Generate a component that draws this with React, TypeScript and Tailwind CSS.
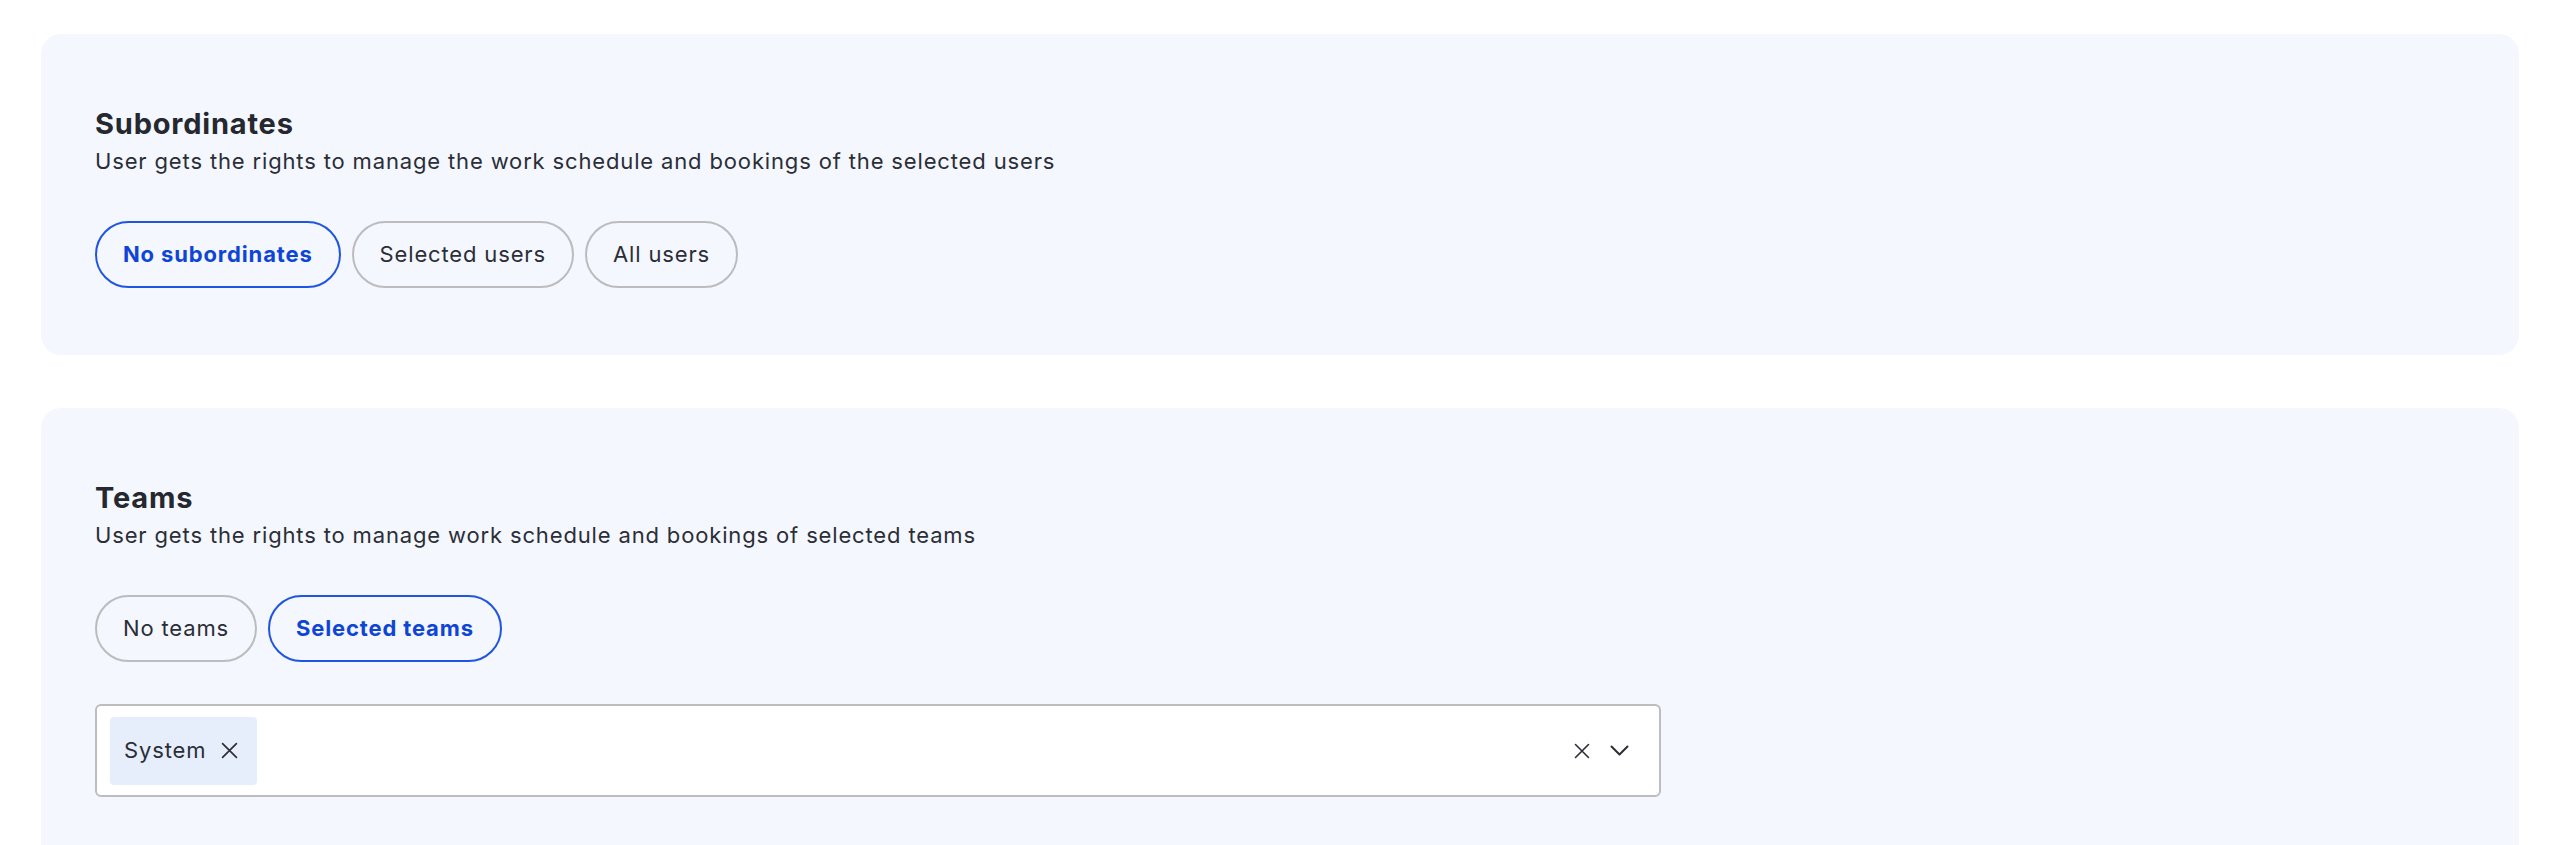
import React from "react";

const font = { fontFamily: "Inter, 'Noto Sans', sans-serif" };

function Pill({ label, active }: { label: string; active?: boolean }) {
  return (
    <button
      className={
        active
          ? "h-[67px] rounded-full border-2 border-[#1f55e0] px-[26px] text-[22px] tracking-[0.85px] font-bold text-[#0f45d6] bg-transparent"
          : "h-[67px] rounded-full border-2 border-[#bcbcbf] px-[26px] text-[22px] tracking-[0.85px] font-normal text-[#2b2e36] bg-transparent"
      }
    >
      {label}
    </button>
  );
}

function XIcon({ size = 17 }: { size?: number }) {
  return (
    <svg width={size} height={size} viewBox="0 0 16 16" fill="none" stroke="#2b2e36" strokeWidth={1.6} strokeLinecap="round">
      <path d="M1.5 1.5 L14.5 14.5 M14.5 1.5 L1.5 14.5" />
    </svg>
  );
}

function Chevron() {
  return (
    <svg width="19" height="11" viewBox="0 0 19 11" fill="none" stroke="#2b2e36" strokeWidth={2} strokeLinecap="round" strokeLinejoin="round">
      <path d="M1.5 1.5 L9.5 9.5 L17.5 1.5" />
    </svg>
  );
}

function Card({ children }: { children: React.ReactNode }) {
  return <div className="rounded-[20px] bg-[#f4f7fe] px-[54px] pt-[72px] pb-[67px]">{children}</div>;
}

export default function App() {
  return (
    <div className="min-h-screen bg-white px-[41px] pt-[34px] text-[#2b2e36]" style={font}>
      <div className="flex flex-col gap-[53px]">
        <Card>
          <h2 className="text-[29px] leading-[36px] tracking-[0.8px] font-bold text-[#25282f]">Subordinates</h2>
          <p className="mt-[4px] text-[22px] leading-[30px] tracking-[0.85px]">
            User gets the rights to manage the work schedule and bookings of the selected users
          </p>
          <div className="mt-[45px] flex gap-[11px]">
            <Pill label="No subordinates" active />
            <Pill label="Selected users" />
            <Pill label="All users" />
          </div>
        </Card>
        <Card>
          <h2 className="text-[29px] leading-[36px] tracking-[0.8px] font-bold text-[#25282f]">Teams</h2>
          <p className="mt-[4px] text-[22px] leading-[30px] tracking-[0.85px]">
            User gets the rights to manage work schedule and bookings of selected teams
          </p>
          <div className="mt-[45px] flex gap-[11px]">
            <Pill label="No teams" />
            <Pill label="Selected teams" active />
          </div>
          <div className="mt-[42px] flex h-[93px] w-[1566px] items-center rounded-[6px] border-2 border-[#bdbdc0] bg-white pl-[13px] pr-[30px]">
            <div className="flex h-[68px] items-center gap-[15px] rounded-[4px] bg-[#e6eefb] pl-[14px] pr-[19px]">
              <span className="text-[22px] tracking-[0.85px]">System</span>
              <XIcon />
            </div>
            <div className="flex-1" />
            <div className="flex items-center gap-[20px]">
              <XIcon size={16} />
              <Chevron />
            </div>
          </div>
        </Card>
      </div>
    </div>
  );
}
